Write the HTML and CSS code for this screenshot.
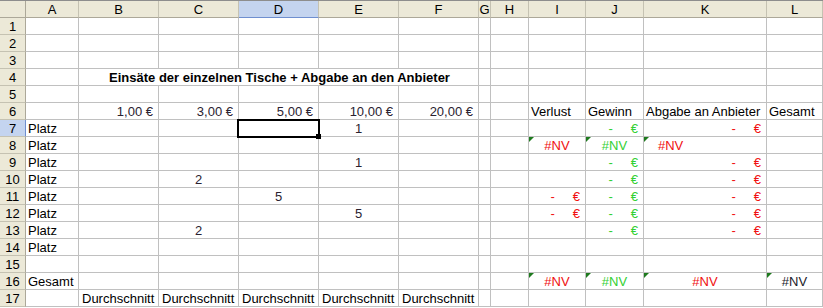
FILE: index.html
```html
<!DOCTYPE html>
<html lang="de">
<head>
	<meta charset="UTF-8">
	<title>Einsätze</title>
	<link rel="stylesheet" href="styles.css">
</head>
<body>
	<div class="sheet">
		<div class="row">
			<div class="corner"></div>
			<div class="h">A</div><div class="h">B</div><div class="h">C</div><div class="h on">D</div><div class="h">E</div><div class="h">F</div>
			<div class="h">G</div><div class="h">H</div><div class="h">I</div><div class="h">J</div><div class="h">K</div><div class="h">L</div>
		</div>
		<div class="row">
			<div class="r">1</div>
			<div class="c"></div><div class="c"></div><div class="c"></div><div class="c"></div><div class="c"></div><div class="c"></div>
			<div class="c"></div><div class="c"></div><div class="c"></div><div class="c"></div><div class="c"></div><div class="c"></div>
		</div>
		<div class="row">
			<div class="r">2</div>
			<div class="c"></div><div class="c"></div><div class="c"></div><div class="c"></div><div class="c"></div><div class="c"></div>
			<div class="c"></div><div class="c"></div><div class="c"></div><div class="c"></div><div class="c"></div><div class="c"></div>
		</div>
		<div class="row">
			<div class="r">3</div>
			<div class="c"></div><div class="c"></div><div class="c"></div><div class="c"></div><div class="c"></div><div class="c"></div>
			<div class="c"></div><div class="c"></div><div class="c"></div><div class="c"></div><div class="c"></div><div class="c"></div>
		</div>
		<div class="row">
			<div class="r">4</div>
			<div class="c"></div>
			<div class="c title">Einsäte der einzelnen Tische + Abgabe an den Anbieter</div>
			<div class="c"></div><div class="c"></div><div class="c"></div><div class="c"></div><div class="c"></div><div class="c"></div>
		</div>
		<div class="row">
			<div class="r">5</div>
			<div class="c"></div><div class="c"></div><div class="c"></div><div class="c"></div><div class="c"></div><div class="c"></div>
			<div class="c"></div><div class="c"></div><div class="c"></div><div class="c"></div><div class="c"></div><div class="c"></div>
		</div>
		<div class="row">
			<div class="r">6</div>
			<div class="c"></div>
			<div class="c num">1,00 €</div><div class="c num">3,00 €</div><div class="c num">5,00 €</div><div class="c num">10,00 €</div><div class="c num">20,00 €</div>
			<div class="c"></div><div class="c"></div>
			<div class="c">Verlust</div><div class="c">Gewinn</div><div class="c">Abgabe an Anbieter</div><div class="c">Gesamt</div>
		</div>
		<div class="row">
			<div class="r on">7</div>
			<div class="c">Platz</div><div class="c"></div><div class="c"></div><div class="c sel"></div><div class="c mid">1</div><div class="c"></div>
			<div class="c"></div><div class="c"></div><div class="c"></div>
			<div class="c acc grn"><span class="d">-</span>€</div><div class="c acc red"><span class="d">-</span>€</div><div class="c"></div>
		</div>
		<div class="row">
			<div class="r">8</div>
			<div class="c">Platz</div><div class="c"></div><div class="c"></div><div class="c"></div><div class="c"></div><div class="c"></div>
			<div class="c"></div><div class="c"></div>
			<div class="c err mid red">#NV</div><div class="c err mid grn">#NV</div><div class="c err red indent">#NV</div><div class="c"></div>
		</div>
		<div class="row">
			<div class="r">9</div>
			<div class="c">Platz</div><div class="c"></div><div class="c"></div><div class="c"></div><div class="c mid">1</div><div class="c"></div>
			<div class="c"></div><div class="c"></div><div class="c"></div>
			<div class="c acc grn"><span class="d">-</span>€</div><div class="c acc red"><span class="d">-</span>€</div><div class="c"></div>
		</div>
		<div class="row">
			<div class="r">10</div>
			<div class="c">Platz</div><div class="c"></div><div class="c mid">2</div><div class="c"></div><div class="c"></div><div class="c"></div>
			<div class="c"></div><div class="c"></div><div class="c"></div>
			<div class="c acc grn"><span class="d">-</span>€</div><div class="c acc red"><span class="d">-</span>€</div><div class="c"></div>
		</div>
		<div class="row">
			<div class="r">11</div>
			<div class="c">Platz</div><div class="c"></div><div class="c"></div><div class="c mid">5</div><div class="c"></div><div class="c"></div>
			<div class="c"></div><div class="c"></div>
			<div class="c acc red"><span class="d">-</span>€</div><div class="c acc grn"><span class="d">-</span>€</div><div class="c acc red"><span class="d">-</span>€</div><div class="c"></div>
		</div>
		<div class="row">
			<div class="r">12</div>
			<div class="c">Platz</div><div class="c"></div><div class="c"></div><div class="c"></div><div class="c mid">5</div><div class="c"></div>
			<div class="c"></div><div class="c"></div>
			<div class="c acc red"><span class="d">-</span>€</div><div class="c acc grn"><span class="d">-</span>€</div><div class="c acc red"><span class="d">-</span>€</div><div class="c"></div>
		</div>
		<div class="row">
			<div class="r">13</div>
			<div class="c">Platz</div><div class="c"></div><div class="c mid">2</div><div class="c"></div><div class="c"></div><div class="c"></div>
			<div class="c"></div><div class="c"></div><div class="c"></div>
			<div class="c acc grn"><span class="d">-</span>€</div><div class="c acc red"><span class="d">-</span>€</div><div class="c"></div>
		</div>
		<div class="row">
			<div class="r">14</div>
			<div class="c">Platz</div><div class="c"></div><div class="c"></div><div class="c"></div><div class="c"></div><div class="c"></div>
			<div class="c"></div><div class="c"></div><div class="c"></div><div class="c"></div><div class="c"></div><div class="c"></div>
		</div>
		<div class="row">
			<div class="r">15</div>
			<div class="c"></div><div class="c"></div><div class="c"></div><div class="c"></div><div class="c"></div><div class="c"></div>
			<div class="c"></div><div class="c"></div><div class="c"></div><div class="c"></div><div class="c"></div><div class="c"></div>
		</div>
		<div class="row">
			<div class="r">16</div>
			<div class="c">Gesamt</div><div class="c"></div><div class="c"></div><div class="c"></div><div class="c"></div><div class="c"></div>
			<div class="c"></div><div class="c"></div>
			<div class="c err mid red">#NV</div><div class="c err mid grn">#NV</div><div class="c err mid red">#NV</div><div class="c err mid">#NV</div>
		</div>
		<div class="row">
			<div class="r">17</div>
			<div class="c"></div>
			<div class="c avg">Durchschnitt</div><div class="c avg">Durchschnitt</div><div class="c avg">Durchschnitt</div><div class="c avg">Durchschnitt</div><div class="c avg">Durchschnitt</div>
			<div class="c"></div><div class="c"></div><div class="c"></div><div class="c"></div><div class="c"></div><div class="c"></div>
		</div>
	</div>
</body>
</html>
```

FILE: styles.css
```css
* { margin: 0; padding: 0; box-sizing: border-box; }
body { background: #fff; color: #000; font: 13px/16px "Liberation Sans", Arial, sans-serif; overflow: hidden; }

.sheet { display: grid; width: 823px; border-top: 1px solid #8d8d8d;
	grid-template-columns: 26px 53px 80px 80px 80px 80px 80px 12px 38px 57px 58px 123px 1fr;
	grid-template-rows: 17px; grid-auto-rows: 17px; }
.row { display: contents; }

/* headers */
.corner { background: #ece9d8; border-right: 1px solid #aca899; border-bottom: 1px solid #aca899; }
.h { background: #ece9d8; border-right: 1px solid #c5c2b2; border-bottom: 1px solid #aca899; text-align: center; padding-top: 1px; }
.r { background: #ece9d8; border-right: 1px solid #aca899; border-bottom: 1px solid #c5c2b2; text-align: center; padding-top: 1px; }
.h.on { background: #c4d4ef; border-bottom-color: #6f8fcf; }
.r.on { background: #c4d4ef; border-right-color: #6f8fcf; }

/* cells */
.c { border-right: 1px solid #c0c0c0; border-bottom: 1px solid #c0c0c0; padding: 1px 2px 0; white-space: nowrap; }
.title { grid-column: span 5; text-align: center; font-weight: bold; padding-left: 4px; }
.num { text-align: right; padding-right: 5px; color: #2a2230; }
.mid { text-align: center; color: #2a2230; }
.avg { padding-left: 3px; }
.indent { padding-left: 14px; }
.red { color: #f01010; }
.grn { color: #33d033; }
.err.mid { color: inherit; }
.err.red { color: #f01010; }
.err.grn { color: #33d033; }
.err.mid:not(.red):not(.grn) { color: #1a1a2a; }

.acc { display: flex; justify-content: flex-end; padding-right: 5px; }
.acc .d { margin-right: 18px; }

/* error marker in the corner */
.err { position: relative; }
.err::before { content: ""; position: absolute; left: 0; top: 0;
	border-top: 5px solid #1e7a1e; border-right: 5px solid transparent; }

/* active cell */
.sel { position: relative; z-index: 1; }
.sel::after { content: ""; position: absolute; left: -2px; top: -1px; right: -2px; bottom: -2px; border: 2px solid #000; }
.sel::before { content: ""; position: absolute; right: -3px; bottom: -3px; width: 5px; height: 5px; background: #000; z-index: 2; }
```
